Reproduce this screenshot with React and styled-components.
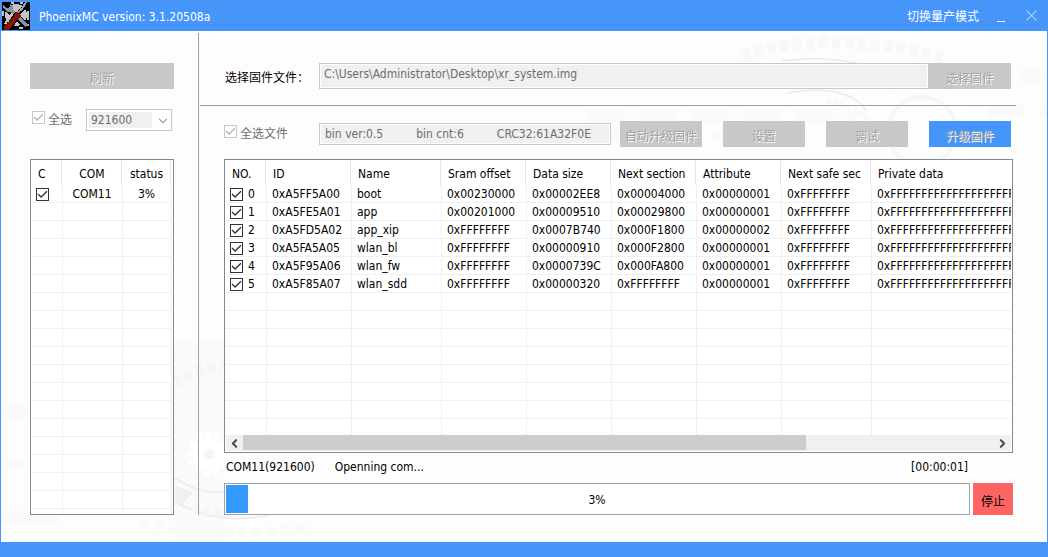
import React, { useState } from "react"
import styled, { createGlobalStyle } from "styled-components"
import { ChevronDown, ChevronLeft, ChevronRight, X } from "lucide-react"

const blue = "#4696fa"
const grey = "#c8c8c8"
const line = "#a0a0a0"

const checkMark = color =>
	`url("data:image/svg+xml,%3Csvg xmlns='http://www.w3.org/2000/svg' viewBox='0 0 11 11'%3E%3Cpath d='M1 5 4.1 8 10 2.2' fill='none' stroke='%23${ color }' stroke-width='1.3'/%3E%3C/svg%3E")`

const GlobalStyle = createGlobalStyle`
    * {
        box-sizing: border-box;
    }

    body {
        margin: 0;
    }

    body, button, input, select {
        font-family: "DejaVu Sans Condensed", "Noto Sans CJK SC", sans-serif;
        font-size: 12px;
    }
`

const Window = styled.div`
    height: 100vh;
    min-height: 400px;
    display: flex;
    flex-direction: column;
    background: ${ blue };
    color: #000;
`

const TitleBar = styled.header`
    display: flex;
    align-items: center;
    height: 31px;
    padding: 0 2px;
    color: #fff;
`

const Title = styled.h1`
    flex: 1;
    margin: 2px 0 0 9px;
    font-size: 12px;
    font-weight: normal;
`

const TitleButton = styled.button`
    display: flex;
    align-items: center;
    justify-content: center;
    height: 28px;
    min-width: 30px;
    padding: 0;
    border: 0;
    background: none;
    color: #fff;
    opacity: ${ props => (props.$faded ? 0.7 : 1) };
`

const ModeButton = styled(TitleButton)`
    margin-right: 7px;
`

const MinimizeMark = styled.span`
    width: 8px;
    height: 1px;
    margin-top: 12px;
    background: #fff;
`

const Content = styled.main`
    position: relative;
    z-index: 0;
    flex: 1;
    min-height: 0;
    display: flex;
    margin: 0 1px 15px;
    padding-top: 2px;
    background: #fdfdfd;
`

const Backdrop = styled.div`
    position: absolute;
    inset: 0;
    z-index: -1;
    overflow: hidden;

    svg {
        position: absolute;
    }

    svg:first-child {
        top: 0;
        right: 0;
    }

    svg:last-child {
        bottom: 0;
        left: 0;
    }
`

const Sidebar = styled.section`
    display: flex;
    flex-direction: column;
    flex: none;
    width: 198px;
    margin-bottom: 27px;
    padding: 30px 24px 0 29px;
    border-right: 1px solid ${ line };
`

const Main = styled.section`
    flex: 1;
    min-width: 0;
    display: flex;
    flex-direction: column;
    padding: 30px 34px 27px 1px;
`

const FileRow = styled.div`
    display: flex;
    align-items: center;
    padding: 0 2px 0 24px;
`

const Divider = styled.hr`
    width: calc(100% + 3px);
    margin: 16px 0 15px;
    border: 0;
    border-top: 1px solid ${ line };
`

const ToolRow = styled.div`
    display: flex;
    align-items: center;
    gap: 21px;
    padding: 0 2px 12px 24px;
`

const FieldLabel = styled.label`
    width: 95px;
    padding-left: 1px;
`

const PathInput = styled.input`
    flex: 1;
    min-width: 0;
    height: 26px;
    padding: 0 4px 4px;
    border: 1px solid ${ grey };
    background: #f0f0f0;
    box-shadow: inset 0 0 0 1px #fff;
    color: #6d6d6d;
`

const BinInfo = styled.div`
    display: flex;
    flex: 1;
    align-items: center;
    gap: 33px;
    height: 22px;
    margin-right: -12px;
    padding: 0 5px;
    border: 1px solid ${ grey };
    background: #f0f0f0;
    box-shadow: inset 0 0 0 1px #fff;
    color: #6d6d6d;
    white-space: nowrap;
    overflow: hidden;
`

const FlatButton = styled.button`
    flex: none;
    width: ${ props => (props.$wide ? "100%" : "82px") };
    height: 26px;
    padding: 2px 0 0;
    border: 0;
    background: ${ props => (props.$primary ? blue : grey) };
    color: ${ line };
    text-shadow: 1px 1px #fff;
`

const SelectRow = styled.div`
    display: flex;
    align-items: center;
    justify-content: space-between;
    padding: 20px 2px 28px;
`

const CheckLabel = styled.label`
    display: flex;
    align-items: flex-start;
    gap: 3px;
    width: ${ props => (props.$file ? "74px" : "auto") };
    color: #6d6d6d;
    line-height: 18px;
    white-space: nowrap;
`

const CheckBox = styled.input.attrs({ type: "checkbox" })`
    appearance: none;
    flex: none;
    width: 13px;
    height: 13px;
    margin: 0;
    border: 1px solid #333;
    background: #fff;

    &:checked {
        background-image: ${ checkMark("333") };
    }

    &:disabled {
        border-color: ${ grey };
    }

    &:disabled:checked {
        background-image: ${ checkMark("b4b4b4") };
    }
`

const SelectBox = styled.div`
    position: relative;
    width: 86px;
    height: 22px;

    svg {
        position: absolute;
        top: 5px;
        right: 2px;
        color: ${ line };
        pointer-events: none;
    }
`

const Select = styled.select`
    appearance: none;
    width: 100%;
    height: 100%;
    padding: 0 4px;
    border: 1px solid ${ grey };
    border-radius: 0;
    background: linear-gradient(#f0f0f0, #f0f0f0) 2px 2px / 63px 16px no-repeat, #fff;
    color: #6d6d6d;
    opacity: 1;
`

const ListBox = styled.div`
    display: flex;
    flex-direction: column;
    flex: 1;
    min-height: 0;
    margin-left: ${ props => props.$indent || 0 }px;
    padding: 1px;
    border: 1px solid #828790;
    background: #fff;
`

const ListView = styled.div`
    flex: 1;
    min-height: 0;
    overflow: hidden;
`

const Table = styled.table`
    width: ${ props => props.$width };
    table-layout: fixed;
    border-collapse: separate;
    border-spacing: 0;
    text-align: left;
`

const HeadCell = styled.th`
    height: 24px;
    padding: ${ props => (props.$centered ? "2px 2px 0 0" : "2px 0 0 6px") };
    background: linear-gradient(#e5e5e5, #e5e5e5) right 1px top / 1px 100% no-repeat;
    font-weight: normal;
    text-align: ${ props => (props.$centered ? "center" : "left") };
    line-height: 16px;
    white-space: nowrap;
`

const Cell = styled.td`
    height: 18px;
    padding: ${ props => (props.$centered ? "1px 1px 0 0" : "1px 0 0 5px") };
    border-right: 1px solid #f0f0f0;
    border-bottom: 1px solid #f0f0f0;
    text-align: ${ props => (props.$centered ? "center" : "left") };
    line-height: 16px;
    white-space: nowrap;
`

const CellCheck = styled.label`
    display: flex;
    align-items: center;
    gap: 5px;
    height: 16px;
    margin-left: -1px;
`

const ScrollBar = styled.div`
    display: flex;
    height: 16px;
    background: #f0f0f0;
`

const ScrollButton = styled.button`
    display: flex;
    align-items: center;
    justify-content: center;
    width: 17px;
    padding: 0;
    border: 0;
    background: none;
    color: #505050;
`

const ScrollTrack = styled.div`
    flex: 1;
`

const ScrollThumb = styled.div`
    width: 75%;
    height: 15px;
    background: #cdcdcd;
`

const StatusRow = styled.div`
    display: flex;
    gap: 20px;
    padding: 6px 45px 7px 26px;
    line-height: 17px;
`

const Elapsed = styled.time`
    margin-left: auto;
`

const ProgressRow = styled.div`
    display: flex;
    gap: 3px;
    height: 32px;
    margin-left: 24px;
`

const Progress = styled.div`
    position: relative;
    flex: 1;
    padding: 1px;
    border: 1px solid ${ line };
    background: #fff;
`

const ProgressFill = styled.div`
    height: 100%;
    background: #3399ff;
`

const ProgressText = styled.span`
    position: absolute;
    inset: 0;
    line-height: 32px;
    text-align: center;
`

const StopButton = styled.button`
    width: 40px;
    padding: 2px 0 0;
    border: 0;
    background: #ff6464;
    color: #000;
`

const columns = [
	{ name: "NO.", width: 41 },
	{ name: "ID", width: 85 },
	{ name: "Name", width: 90 },
	{ name: "Sram offset", width: 85 },
	{ name: "Data size", width: 85 },
	{ name: "Next section", width: 85 },
	{ name: "Attribute", width: 85 },
	{ name: "Next safe sec", width: 90 },
	{ name: "Private data", width: 400 },
]

const sections = [
	["0xA5FF5A00", "boot", "0x00230000", "0x00002EE8", "0x00004000", "0x00000001"],
	["0xA5FE5A01", "app", "0x00201000", "0x00009510", "0x00029800", "0x00000001"],
	["0xA5FD5A02", "app_xip", "0xFFFFFFFF", "0x0007B740", "0x000F1800", "0x00000002"],
	["0xA5FA5A05", "wlan_bl", "0xFFFFFFFF", "0x00000910", "0x000F2800", "0x00000001"],
	["0xA5F95A06", "wlan_fw", "0xFFFFFFFF", "0x0000739C", "0x000FA800", "0x00000001"],
	["0xA5F85A07", "wlan_sdd", "0xFFFFFFFF", "0x00000320", "0xFFFFFFFF", "0x00000001"],
]

const nextSafe = "0xFFFFFFFF"
const privateData = "0x" + "F".repeat(24)
const blankRows = Array.from({ length: 40 }, (_, i) => i)

const Logo = () => (
	<svg width="28" height="28" viewBox="0 0 28 28" shapeRendering="crispEdges" aria-hidden="true">
		<rect width="28" height="28" fill="#000"/>
		<circle cx="14" cy="13" r="11" fill="#c4c4c4"/>
		<path d="M9 1h3M18 1h3M1 9v5M26 9v9M5 19l-2 3M17 26h4M24 23h3" stroke="#c4c4c4" strokeWidth="2"/>
		<path d="M4 5l6 6M14 14l10 10" stroke="#000" strokeWidth="6"/>
		<path d="M1 6l4 4h4l2-2V5L8 1v3L6 6H4L1 3z" fill="#8792a8"/>
		<path d="M9 8l5 5M17 16l8 8" stroke="#8792a8" strokeWidth="3"/>
		<path d="M24 1l-4 7-5 4" fill="none" stroke="#000" strokeWidth="4"/>
		<path d="M24 0l-4 7-5 4" fill="none" stroke="#98a1b3" strokeWidth="2"/>
		<path d="M1 28L13 10l5 5L9 28z" fill="#000"/>
		<path d="M2 28v-4l10-10 4 2L7 28z" fill="#8b1207"/>
		<path d="M14 10l3 1 2 3-3 3-4-3z" fill="#8b1207"/>
	</svg>
)

const Gears = () => (
	<Backdrop aria-hidden="true">
		<svg width="460" height="240" viewBox="0 0 460 240" fill="none" stroke="#f8f8f8">
			<path d="M155 25q90-28 200 2" strokeWidth="12" strokeDasharray="9 4"/>
			<path d="M195 30q40-6 80 3" strokeWidth="1" stroke="#e6e6e6"/>
			<path d="M200 62q60-10 80 18" strokeWidth="2" stroke="#efefef"/>
			<path d="M240 70q30 4 50 28" strokeWidth="5" strokeDasharray="4 3"/>
			<circle cx="335" cy="100" r="34" strokeWidth="4" stroke="#f6f6f6"/>
			<circle cx="335" cy="100" r="46" strokeWidth="7" stroke="#fff" strokeDasharray="12 8"/>
			<path d="M0 85h270M20 105h200M380 45h80M400 80h60" strokeWidth="12" strokeDasharray="38 14" stroke="#fafafa"/>
		</svg>
		<svg width="360" height="200" viewBox="0 0 360 200" fill="none" stroke="#f6f6f6">
			<path d="M173 0h50v200h-50z" fill="#fafafa" stroke="none"/>
			<circle cx="208" cy="112" r="16" fill="#fff" stroke="#fff" strokeWidth="12" strokeDasharray="5 3"/>
			<circle cx="208" cy="112" r="5" fill="#f5f5f5"/>
			<path d="M174 42q24-18 48-16" strokeWidth="12" strokeDasharray="8 4"/>
			<path d="M174 136q22 16 50 14M174 160q44 24 95 13" strokeWidth="2" stroke="#ededed"/>
			<path d="M174 144l18 6-10 12-8-2z" fill="#efefef" stroke="none"/>
			<path d="M192 165q30 10 66 2" strokeWidth="8" strokeDasharray="7 4"/>
			<path d="M140 180q90 18 170 4" strokeWidth="9" strokeDasharray="8 6" stroke="#fafafa"/>
			<path d="M0 70h28M0 122h28M0 175h60" strokeWidth="12" stroke="#fafafa"/>
		</svg>
	</Backdrop>
)

const App = () => {
	const [checked, setChecked] = useState(sections.map(() => true))
	const [portChecked, setPortChecked] = useState(true)
	const progress = 3

	const toggle = index => {
		setChecked(prev => prev.map((value, i) => (i === index ? !value : value)))
	}

	return (
		<Window>
			<GlobalStyle/>
			<TitleBar>
				<Logo/>
				<Title>PhoenixMC version: 3.1.20508a</Title>
				<ModeButton>切换量产模式</ModeButton>
				<TitleButton aria-label="Minimize">
					<MinimizeMark/>
				</TitleButton>
				<TitleButton aria-label="Close" $faded>
					<X size={ 19 } strokeWidth={ 1.3 }/>
				</TitleButton>
			</TitleBar>
			<Content>
				<Gears/>
				<Sidebar>
					<FlatButton $wide disabled>刷新</FlatButton>
					<SelectRow>
						<CheckLabel>
							<CheckBox defaultChecked disabled/>
							全选
						</CheckLabel>
						<SelectBox>
							<Select aria-label="Baud rate" disabled defaultValue="921600">
								<option>921600</option>
							</Select>
							<ChevronDown size={ 14 } strokeWidth={ 2 }/>
						</SelectBox>
					</SelectRow>
					<ListBox>
						<ListView>
							<Table $width="100%">
								<colgroup>
									<col width="31"/>
									<col width="60"/>
									<col/>
								</colgroup>
								<thead>
									<tr>
										<HeadCell>C</HeadCell>
										<HeadCell $centered>COM</HeadCell>
										<HeadCell $centered>status</HeadCell>
									</tr>
								</thead>
								<tbody>
									<tr>
										<Cell>
											<CellCheck>
												<CheckBox
													aria-label="COM11"
													checked={ portChecked }
													onChange={ e => setPortChecked(e.target.checked) }
												/>
											</CellCheck>
										</Cell>
										<Cell $centered>COM11</Cell>
										<Cell $centered>{ progress }%</Cell>
									</tr>
									{ blankRows.map(row => (
										<tr key={ row }>
											<Cell/>
											<Cell/>
											<Cell/>
										</tr>
									)) }
								</tbody>
							</Table>
						</ListView>
					</ListBox>
				</Sidebar>
				<Main>
					<FileRow>
						<FieldLabel htmlFor="firmware">选择固件文件：</FieldLabel>
						<PathInput
							id="firmware"
							type="text"
							readOnly
							value="C:\Users\Administrator\Desktop\xr_system.img"
						/>
						<FlatButton disabled>选择固件</FlatButton>
					</FileRow>
					<Divider/>
					<ToolRow>
						<CheckLabel $file>
							<CheckBox defaultChecked disabled/>
							全选文件
						</CheckLabel>
						<BinInfo>
							<span>bin ver:0.5</span>
							<span>bin cnt:6</span>
							<span>CRC32:61A32F0E</span>
						</BinInfo>
						<FlatButton disabled>自动升级固件</FlatButton>
						<FlatButton disabled>设置</FlatButton>
						<FlatButton disabled>调试</FlatButton>
						<FlatButton $primary disabled>升级固件</FlatButton>
					</ToolRow>
					<ListBox $indent={ 24 }>
						<ListView>
							<Table $width="1046px">
								<colgroup>
									{ columns.map(column => <col key={ column.name } width={ column.width }/>) }
								</colgroup>
								<thead>
									<tr>
										{ columns.map(column => <HeadCell key={ column.name }>{ column.name }</HeadCell>) }
									</tr>
								</thead>
								<tbody>
									{ sections.map((section, index) => (
										<tr key={ section[0] }>
											<Cell>
												<CellCheck>
													<CheckBox checked={ checked[index] } onChange={ () => toggle(index) }/>
													{ index }
												</CellCheck>
											</Cell>
											{ section.map((value, i) => <Cell key={ i }>{ value }</Cell>) }
											<Cell>{ nextSafe }</Cell>
											<Cell>{ privateData }</Cell>
										</tr>
									)) }
									{ blankRows.map(row => (
										<tr key={ row }>
											{ columns.map(column => <Cell key={ column.name }/>) }
										</tr>
									)) }
								</tbody>
							</Table>
						</ListView>
						<ScrollBar>
							<ScrollButton aria-label="Scroll left">
								<ChevronLeft size={ 13 } strokeWidth={ 4 }/>
							</ScrollButton>
							<ScrollTrack>
								<ScrollThumb/>
							</ScrollTrack>
							<ScrollButton aria-label="Scroll right">
								<ChevronRight size={ 13 } strokeWidth={ 4 }/>
							</ScrollButton>
						</ScrollBar>
					</ListBox>
					<StatusRow>
						<span>COM11(921600)</span>
						<span>Openning com...</span>
						<Elapsed>[00:00:01]</Elapsed>
					</StatusRow>
					<ProgressRow>
						<Progress role="progressbar" aria-valuenow={ progress }>
							<ProgressFill style={ { width: `${ progress }%` } }/>
							<ProgressText>{ progress }%</ProgressText>
						</Progress>
						<StopButton>停止</StopButton>
					</ProgressRow>
				</Main>
			</Content>
		</Window>
	)
}

export default App
